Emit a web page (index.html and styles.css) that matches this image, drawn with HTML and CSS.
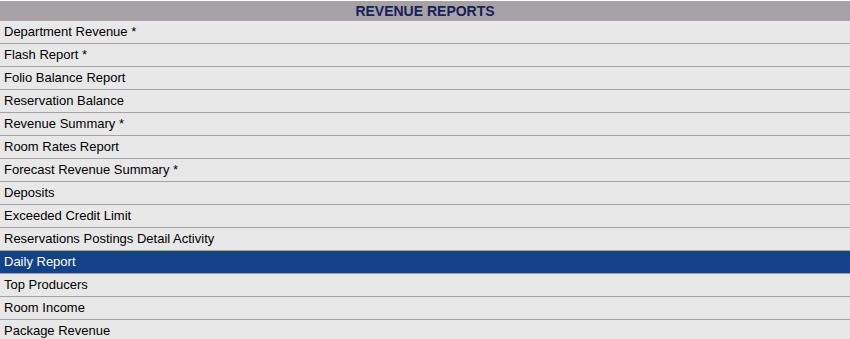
FILE: index.html
```html
<!DOCTYPE html>
<html>
<head>
<meta charset="utf-8">
<link rel="stylesheet" href="styles.css">
</head>
<body>
<div class="panel">
  <div class="panel-head">REVENUE REPORTS</div>
  <ul class="report-list">
    <li class="report">Department Revenue *</li>
    <li class="report">Flash Report *</li>
    <li class="report">Folio Balance Report</li>
    <li class="report">Reservation Balance</li>
    <li class="report">Revenue Summary *</li>
    <li class="report">Room Rates Report</li>
    <li class="report">Forecast Revenue Summary *</li>
    <li class="report">Deposits</li>
    <li class="report">Exceeded Credit Limit</li>
    <li class="report">Reservations Postings Detail Activity</li>
    <li class="report selected">Daily Report</li>
    <li class="report">Top Producers</li>
    <li class="report">Room Income</li>
    <li class="report">Package Revenue</li>
  </ul>
</div>
</body>
</html>
```
FILE: styles.css
```css
html, body {
  margin: 0;
  padding: 0;
  background: #ffffff;
}
body {
  font-family: "Liberation Sans", Arial, sans-serif;
}
.panel {
  width: 850px;
  padding-top: 1px;
}
.panel-head {
  height: 20px;
  line-height: 21px;
  background: #a7a2a5;
  color: #16205e;
  font-weight: bold;
  font-size: 14px;
  text-align: center;
}
.report-list {
  list-style: none;
  margin: 0;
  padding: 0;
}
.report {
  height: 22px;
  line-height: 22px;
  background: #e8e8e8;
  border-bottom: 1px solid #a3a3a3;
  color: #000000;
  font-size: 13px;
  padding-left: 4px;
}
.report.selected {
  background: #144289;
  color: #ffffff;
}
```
